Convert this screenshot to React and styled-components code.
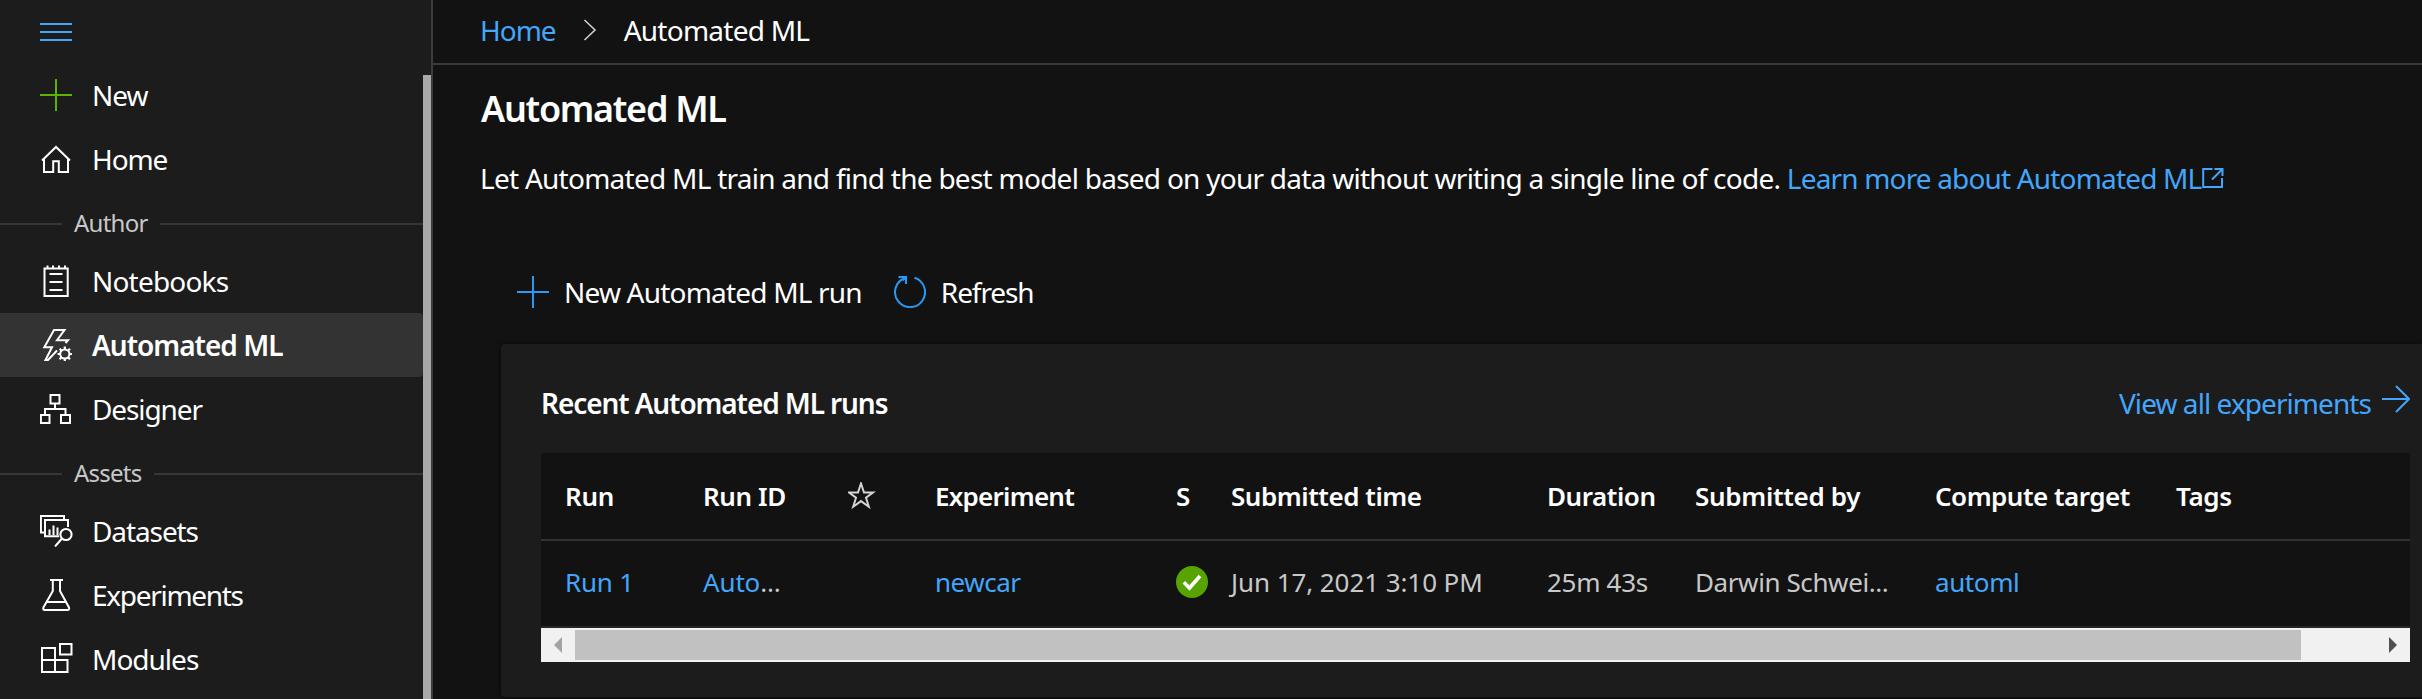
import React from 'react';
import styled, { createGlobalStyle } from 'styled-components';

const GlobalStyle = createGlobalStyle`
  * { box-sizing: border-box; }
  body {
    margin: 0;
    background: #121212;
    color: #fff;
    font-family: "Noto Sans", "Open Sans", sans-serif;
    font-size: 28px;
    line-height: 38px;
    overflow: hidden;
  }
`;

const Page = styled.div`
  display: flex;
  width: 100%;
  height: 699px;
  overflow: hidden;
`;

const Text = styled.span`
  letter-spacing: ${(p) => p.$track || 0}px;
  white-space: pre;
`;

const Link = styled.a`
  color: #43a6fa;
  letter-spacing: ${(p) => p.$track || 0}px;
  text-decoration: none;
  white-space: pre;
`;

const Icon = styled.svg`
  display: block;
  flex: none;
  fill: none;
  stroke: currentColor;
  stroke-width: 2;
`;

/* Sidebar */
const Sidebar = styled.nav`
  display: flex;
  flex-direction: column;
  flex: none;
  width: 433px;
  background: #1c1c1c;
  border-right: 2px solid #3c3c3c;
`;

const MenuToggle = styled.div`
  flex: none;
  height: 63px;
  padding: 16px 0 0 40px;
  color: #43a6fa;
`;

const NavScroller = styled.div`
  display: flex;
  flex: 1;
`;

const NavList = styled.div`
  flex: 1;
`;

const NavTrack = styled.div`
  width: 8px;
  padding-top: 12px;
`;

const NavThumb = styled.div`
  height: 100%;
  background: #a8a8a8;
`;

const NavItem = styled.div`
  display: flex;
  align-items: center;
  gap: 19px;
  height: 64px;
  padding-left: 40px;
  border-radius: 0 4px 4px 0;
  background: ${(p) => (p.$active ? '#333333' : 'transparent')};
  font-weight: ${(p) => (p.$active ? 600 : 400)};
`;

const NavIcon = styled(Icon)`
  color: ${(p) => p.$color || '#fff'};
`;

const NavSection = styled.div`
  display: flex;
  align-items: center;
  gap: 12px;
  height: 58px;
  padding-top: 8px;
  color: #c8c8c8;
  font-size: 24px;
  line-height: 32px;
`;

const SectionLabel = styled(Text)`
  margin-top: -2px;
`;

const Rule = styled.div`
  width: ${(p) => (p.$lead ? '62px' : 'auto')};
  flex: ${(p) => (p.$lead ? 'none' : 1)};
  height: 2px;
  background: #363636;
`;

/* Main area */
const Main = styled.main`
  flex: 1;
  min-width: 0;
  display: flex;
  flex-direction: column;
`;

const Breadcrumb = styled.div`
  display: flex;
  align-items: center;
  flex: none;
  height: 65px;
  padding: 0 0 3px 47px;
  border-bottom: 2px solid #3a3a3a;
`;

const Chevron = styled(Icon)`
  margin: 0 27px 0 27px;
  color: #d0d0d0;
`;

const Title = styled.h1`
  margin: 20px 0 0 48px;
  font-size: 36px;
  font-weight: 600;
  line-height: 48px;
  letter-spacing: -1.3px;
`;

const Intro = styled.p`
  display: flex;
  align-items: center;
  margin: 26px 0 0 47px;
  line-height: 38px;
  white-space: pre;
`;

const Toolbar = styled.div`
  display: flex;
  align-items: center;
  gap: 32px;
  height: 64px;
  margin: 63px 0 20px 84px;
`;

const Command = styled.div`
  display: flex;
  align-items: center;
  gap: 15px;
  color: #fff;

  svg { color: #2899f5; }
`;

const Card = styled.section`
  flex: none;
  height: 353px;
  margin-left: 68px;
  padding: 0 12px 0 40px;
  border-radius: 4px 0 0 4px;
  background: #1c1c1c;
  box-shadow: 0 0 5px rgba(0, 0, 0, 0.6);
`;

const CardHeader = styled.div`
  display: flex;
  align-items: center;
  justify-content: space-between;
  height: 109px;
  padding-top: 9px;
`;

const CardTitle = styled.h2`
  margin: 0;
  font-size: 28px;
  font-weight: 600;
  line-height: 38px;
  letter-spacing: -1.1px;
`;

const ViewAll = styled.div`
  display: flex;
  align-items: center;
  gap: 11px;
  color: #43a6fa;

  svg { margin-bottom: 8px; }
`;

const Row = styled.div`
  display: grid;
  grid-template-columns: 138px 145px 87px 241px 55px 316px 148px 240px 241px 1fr;
  align-items: center;
  height: ${(p) => (p.$head ? 88 : 87)}px;
  padding: 0 0 ${(p) => (p.$head ? 0 : 3)}px 24px;
  background: #121212;
  border-bottom: 2px solid ${(p) => (p.$head ? '#333333' : '#262626')};
  color: ${(p) => (p.$head ? '#ffffff' : '#c8c8c8')};
  font-size: 26px;
  font-weight: ${(p) => (p.$head ? 600 : 400)};
  line-height: 36px;
`;

const ScrollBar = styled.div`
  display: flex;
  align-items: center;
  height: 34px;
  background: #f1f1f1;
`;

const ScrollButton = styled.svg`
  flex: none;
  fill: ${(p) => p.$color};
`;

const ScrollThumb = styled.div`
  width: 1726px;
  height: 30px;
  margin-right: 88px;
  background: #c1c1c1;
`;

const glyphs = {
  plus: <path d="M0 16H32M16 0V32" />,
  home: <path d="M2 17.5 16 4 30 17.5M4 15.5V29H13.2V18.2H18.8V29H28V15.5" />,
  notebook: (
    <path d="M4.5 3.5H27.7V31H4.5ZM9.5 9H22.5M9.5 17H22.5M9.5 25H22.5M7.5 4V.5M13 4V.5M19 4V.5M25 4V.5" />
  ),
  automl: (
    <>
      <path d="M25.5 14 28 11.2H17L24.5 1H14L4.3 18.3H12L5.5 31H8L17 21.5" />
      <circle cx="24.8" cy="25" r="4.6" />
      <path
        d="M24.8 20.5V17.5M24.8 32.5V29.5M20.3 25H17.5M32 25H29.2M21.6 21.8 19.6 19.8M28 28.2 30 30.2M28 21.8 30 19.8M21.6 28.2 19.6 30.2"
        strokeWidth="2.2"
      />
    </>
  ),
  designer: (
    <path d="M10.5 2H19.5V10.5H10.5ZM.9 22H9.5V30H.9ZM21 22H30V30H21ZM15 10.5V16M5 22V16H25.5V22" />
  ),
  datasets: (
    <>
      <path d="M4 17.5H.9V1H24V5M19 21.3H5V5H28V12M9.5 20V14.5M13.5 20V10.5M17.5 20V12.5" />
      <circle cx="26" cy="19.5" r="5.6" />
      <path d="M22 23.5 15 31.5" />
    </>
  ),
  flask: (
    <path d="M10 1H23M12.8 1V12L3.4 28.5Q2.6 31 5 31H27.4Q29.8 31 29 28.5L20 12V1M7.2 23H25.3" />
  ),
  modules: <path d="M2 5H15V29H2ZM2 17H27.5V29H15M20 1H31.5V11.5H20Z" />,
};

function Glyph({ name, color }) {
  return (
    <NavIcon width="33" height="32" viewBox="0 0 33 32" $color={color}>
      {glyphs[name]}
    </NavIcon>
  );
}

function NavEntry({ icon, label, track = -0.8, color, active }) {
  return (
    <NavItem $active={active}>
      <Glyph name={icon} color={color} />
      <Text $track={track}>{label}</Text>
    </NavItem>
  );
}

function Section({ label }) {
  return (
    <NavSection>
      <Rule $lead />
      <SectionLabel $track={-0.75}>{label}</SectionLabel>
      <Rule />
    </NavSection>
  );
}

export default function App() {
  return (
    <Page>
      <GlobalStyle />
      <Sidebar>
        <MenuToggle>
          <Icon width="32" height="32" viewBox="0 0 32 32">
            <path d="M0 8H32M0 16H32M0 24H32" />
          </Icon>
        </MenuToggle>
        <NavScroller>
          <NavList>
            <NavEntry icon="plus" label="New" color="#5db300" track={-1} />
            <NavEntry icon="home" label="Home" track={-1.1} />
            <Section label="Author" />
            <NavEntry icon="notebook" label="Notebooks" />
            <NavEntry icon="automl" label="Automated ML" track={-1} active />
            <NavEntry icon="designer" label="Designer" track={-1.1} />
            <Section label="Assets" />
            <NavEntry icon="datasets" label="Datasets" track={-1.1} />
            <NavEntry icon="flask" label="Experiments" track={-1.3} />
            <NavEntry icon="modules" label="Modules" track={-1} />
          </NavList>
          <NavTrack>
            <NavThumb />
          </NavTrack>
        </NavScroller>
      </Sidebar>
      <Main>
        <Breadcrumb>
          <Link $track={-1}>Home</Link>
          <Chevron width="14" height="22" viewBox="0 0 14 22">
            <path d="M1.5 1 12 11 1.5 21" strokeWidth="1.6" />
          </Chevron>
          <Text $track={-0.75}>Automated ML</Text>
        </Breadcrumb>
        <Title>Automated ML</Title>
        <Intro>
          <Text $track={-0.74}>
            {'Let Automated ML train and find the best model based on your data without writing a single line of code. '}
          </Text>
          <Link $track={-0.83}>Learn more about Automated ML</Link>
          <Icon width="23" height="22" viewBox="0 0 23 22" color="#43a6fa">
            <path d="M11.5 2H2.2V20H21V11M21.5 2 11 12.5M13.5 2H21.5V9" />
          </Icon>
        </Intro>
        <Toolbar>
          <Command>
            <Icon width="32" height="32" viewBox="0 0 32 32">
              {glyphs.plus}
            </Icon>
            <Text $track={-0.8}>New Automated ML run</Text>
          </Command>
          <Command>
            <Icon width="32" height="32" viewBox="0 0 32 32">
              <path d="M20.5 1.8A15 15 0 1 1 11 2M4.5 1H12V8M11.8 1.4 8.5 4.5" />
            </Icon>
            <Text $track={-1.1}>Refresh</Text>
          </Command>
        </Toolbar>
        <Card>
          <CardHeader>
            <CardTitle>Recent Automated ML runs</CardTitle>
            <ViewAll>
              <Link $track={-0.93}>View all experiments</Link>
              <Icon width="28" height="28" viewBox="0 0 28 28">
                <path d="M0 14H27M14 1 27 14 14 27" />
              </Icon>
            </ViewAll>
          </CardHeader>
          <Row $head>
            <Text $track={-0.3}>Run</Text>
            <Text $track={-0.4}>Run ID</Text>
            <Icon width="28" height="28" viewBox="0 0 28 28" color="#d4d4d4">
              <path d="M13 1.5 16 10.5H25L18 15.7 20.8 24.7 13 19.1 5.2 24.7 8 15.7 1 10.5H10Z" />
            </Icon>
            <Text $track={-0.75}>Experiment</Text>
            <Text>S</Text>
            <Text $track={-0.45}>Submitted time</Text>
            <Text $track={-0.45}>Duration</Text>
            <Text $track={-0.3}>Submitted by</Text>
            <Text $track={-0.5}>Compute target</Text>
            <Text $track={-0.3}>Tags</Text>
          </Row>
          <Row>
            <Link $track={-0.2}>Run 1</Link>
            <Text $track={-0.15}>
              <Link $track={-0.15}>Auto</Link>...
            </Text>
            <span />
            <Link $track={-0.5}>newcar</Link>
            <Icon width="32" height="32" viewBox="0 0 32 32">
              <circle cx="16" cy="16" r="16" fill="#57a300" stroke="none" />
              <path d="M7.8 16.2 13.5 22 24 10" stroke="#fff" strokeWidth="3.6" />
            </Icon>
            <Text $track={-0.08}>Jun 17, 2021 3:10 PM</Text>
            <Text $track={-0.3}>25m 43s</Text>
            <Text $track={-0.4}>Darwin Schwei...</Text>
            <Link $track={-0.4}>automl</Link>
          </Row>
          <ScrollBar>
            <ScrollButton width="34" height="34" $color="#a3a3a3">
              <path d="M21 9V25L13 17Z" />
            </ScrollButton>
            <ScrollThumb />
            <ScrollButton width="21" height="34" $color="#505050">
              <path d="M0 9V25L8 17Z" />
            </ScrollButton>
          </ScrollBar>
        </Card>
      </Main>
    </Page>
  );
}
